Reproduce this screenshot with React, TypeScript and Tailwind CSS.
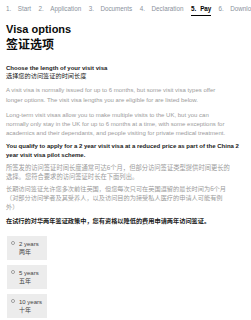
import React from "react";

const steps = [
  { n: "1.", t: "Start" },
  { n: "2.", t: "Application" },
  { n: "3.", t: "Documents" },
  { n: "4.", t: "Declaration" },
  { n: "5.", t: "Pay", active: true },
  { n: "6.", t: "Download" },
];

const options = [
  { en: "2 years", cn: "两年" },
  { en: "5 years", cn: "五年" },
  { en: "10 years", cn: "十年" },
];

export default function App() {
  return (
    <div className="w-[251px] h-[320px] overflow-hidden bg-white font-['Liberation_Sans','Noto_Sans_CJK_SC',sans-serif]">
      <div className="flex h-[18px] pt-[5px] pl-[6px] whitespace-nowrap text-[6.3px] leading-[8px] text-[#8a929c]">
        {steps.map((s) =>
          s.active ? (
            <span key={s.n} className="mr-[7px] flex font-bold text-black border-b-[1.5px] border-black h-[10.5px]">
              <span>{s.n}</span>
              <span className="ml-[4px]">{s.t}</span>
            </span>
          ) : (
            <span key={s.n} className="mr-[7.5px] flex">
              <span>{s.n}</span>
              <span className="ml-[6.5px]">{s.t}</span>
            </span>
          )
        )}
      </div>

      <div className="px-[6px]">
        <h1 className="mt-[5px] text-[11px] leading-[13px] font-bold text-[#0b0c0c]">Visa options</h1>
        <h2 className="mt-[1px] text-[12px] leading-[14px] font-bold text-[#0b0c0c] font-['Noto_Sans_CJK_SC',sans-serif]">
          签证选项
        </h2>

        <div className="mt-[14px] text-[6px] leading-[7px] text-[#222]">
          <div className="font-bold">Choose the length of your visit visa</div>
          <div className="font-['Noto_Sans_CJK_SC',sans-serif] text-[6.2px]">选择您的访问签证的时间长度</div>
        </div>

        <p className="mt-[7px] whitespace-nowrap text-[6px] leading-[9.5px] text-[#9b9b9b]">
          A visit visa is normally issued for up to 6 months, but some visit visa types offer
          <br />
          longer options. The visit visa lengths you are eligible for are listed below.
        </p>

        <p className="mt-[6px] whitespace-nowrap text-[6px] leading-[9px] text-[#9b9b9b]">
          Long-term visit visas allow you to make multiple visits to the UK, but you can
          <br />
          normally only stay in the UK for up to 6 months at a time, with some exceptions for
          <br />
          academics and their dependants, and people visiting for private medical treatment.
        </p>

        <p className="mt-[4px] whitespace-nowrap text-[6px] leading-[8.5px] font-bold text-[#1a1a1a]">
          You qualify to apply for a 2 year visit visa at a reduced price as part of the China 2
          <br />
          year visit visa pilot scheme.
        </p>

        <p className="mt-[4px] whitespace-nowrap text-[6.3px] leading-[9px] text-[#9b9b9b] font-['Noto_Sans_CJK_SC',sans-serif]">
          所签发的访问签证时间长度通常可达6个月，但部分访问签证类型提供时间更长的
          <br />
          选择。您符合要求的访问签证时长在下面列出。
        </p>

        <p className="mt-[4px] whitespace-nowrap text-[6.2px] leading-[8.8px] text-[#9b9b9b] font-['Noto_Sans_CJK_SC',sans-serif]">
          长期访问签证允许您多次前往英国，但您每次只可在英国逗留的最长时间为6个月
          <br />
          （对部分访问学者及其受养人，以及访问目的为接受私人医疗的申请人可能有例
          <br />
          外）
        </p>

        <p className="mt-[5px] whitespace-nowrap text-[6.2px] leading-[9px] font-bold text-[#1a1a1a] font-['Noto_Sans_CJK_SC',sans-serif]">
          在试行的对华两年签证政策中，您有资格以降低的费用申请两年访问签证。
        </p>

        <div className="mt-[11px] ml-[1px] flex flex-col items-start gap-[5px]">
          {options.map((o) => (
            <div key={o.en} className="flex min-w-[40px] h-[24px] bg-[#ececec] pl-[4px] pr-[4px] pt-[4px] whitespace-nowrap">
              <span className="mt-[1px] w-[4px] h-[4px] rounded-full border-[0.5px] border-[#9a9a9a] bg-white shrink-0" />
              <div className="ml-[4px] text-[6px] leading-[8px] text-[#444]">
                <div>{o.en}</div>
                <div className="font-['Noto_Sans_CJK_SC',sans-serif]">{o.cn}</div>
              </div>
            </div>
          ))}
        </div>
      </div>
    </div>
  );
}
